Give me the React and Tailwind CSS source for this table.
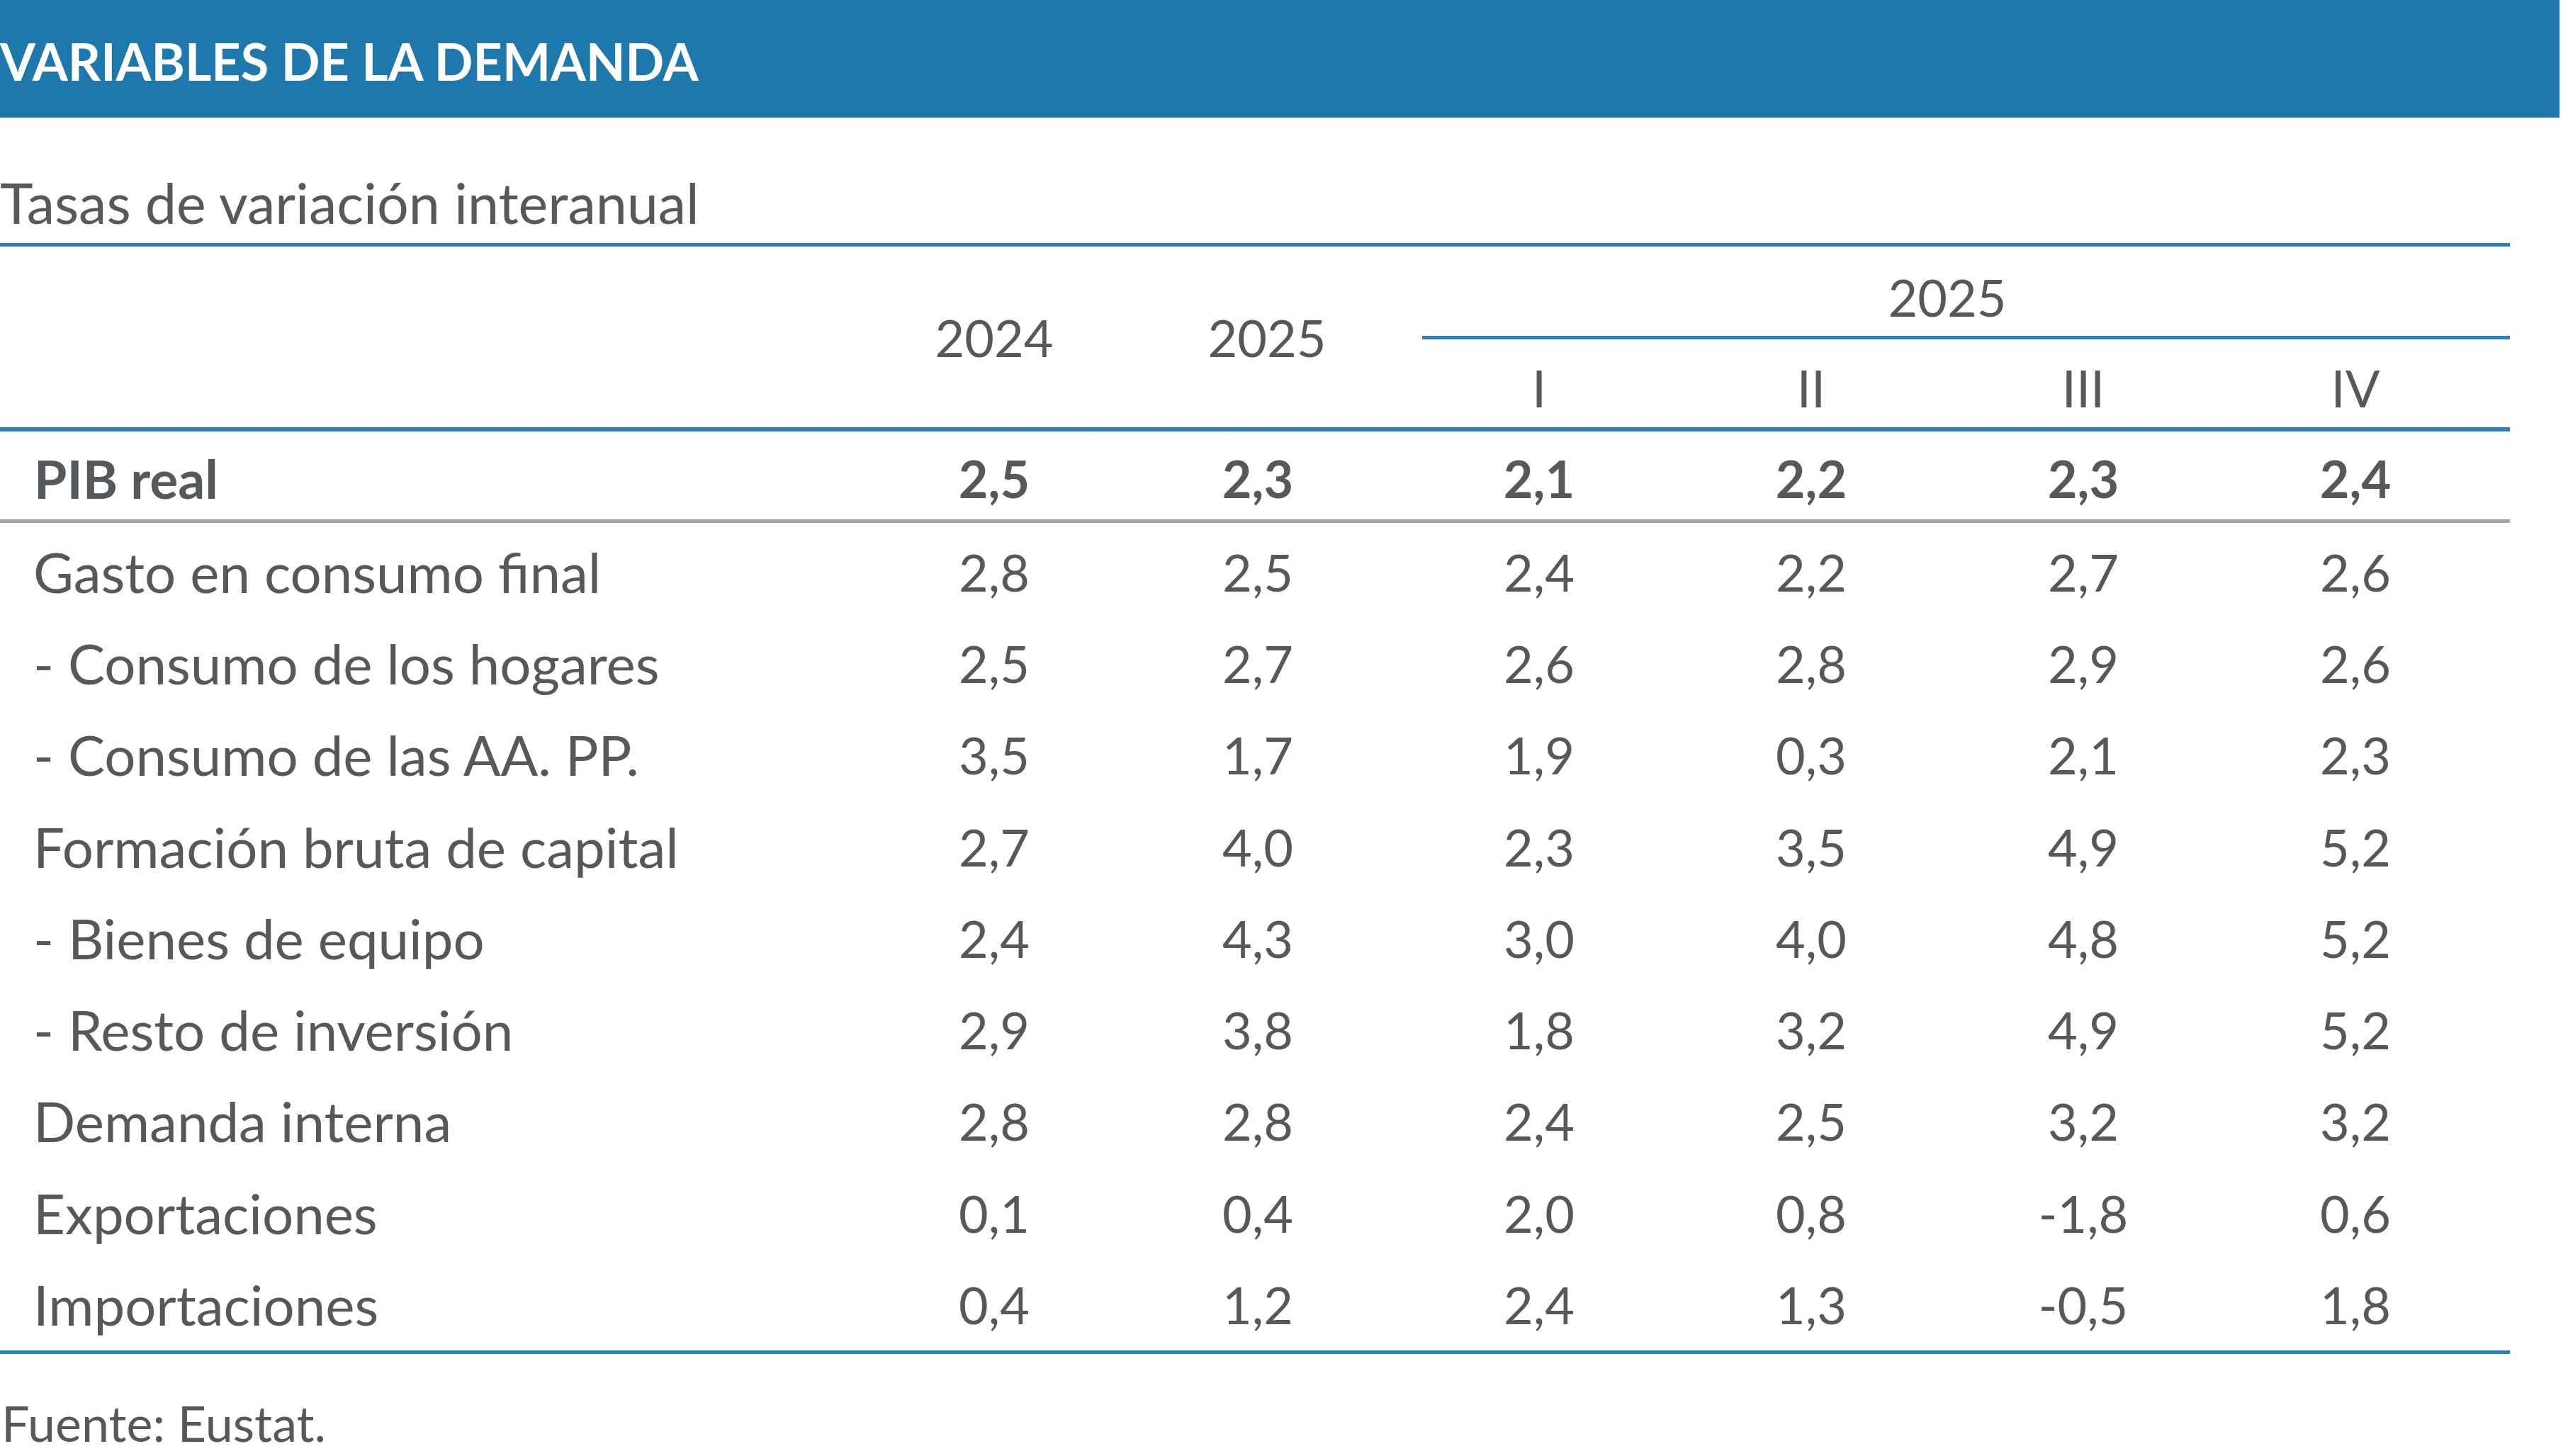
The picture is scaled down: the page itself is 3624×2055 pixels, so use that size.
import React from 'react'

const rows = [
  ['Gasto en consumo final', ['2,8', '2,5', '2,4', '2,2', '2,7', '2,6']],
  ['- Consumo de los hogares', ['2,5', '2,7', '2,6', '2,8', '2,9', '2,6']],
  ['- Consumo de las AA. PP.', ['3,5', '1,7', '1,9', '0,3', '2,1', '2,3']],
  ['Formación bruta de capital', ['2,7', '4,0', '2,3', '3,5', '4,9', '5,2']],
  ['- Bienes de equipo', ['2,4', '4,3', '3,0', '4,0', '4,8', '5,2']],
  ['- Resto de inversión', ['2,9', '3,8', '1,8', '3,2', '4,9', '5,2']],
  ['Demanda interna', ['2,8', '2,8', '2,4', '2,5', '3,2', '3,2']],
  ['Exportaciones', ['0,1', '0,4', '2,0', '0,8', '-1,8', '0,6']],
  ['Importaciones', ['0,4', '1,2', '2,4', '1,3', '-0,5', '1,8']],
]

const Cells = ({ values }) => (
  <>
    <div className="w-[372px] text-center text-[72px]">{values[0]}</div>
    <div className="w-[372px] text-center text-[72px]">{values[1]}</div>
    <div className="w-[19px]" />
    <div className="w-[384px] text-center text-[72px]">{values[2]}</div>
    <div className="w-[384px] text-center text-[72px]">{values[3]}</div>
    <div className="w-[384px] text-center text-[72px]">{values[4]}</div>
    <div className="w-[384px] text-center text-[72px]">{values[5]}</div>
  </>
)

const App = () => {
  return (
    <div className="w-[3624px] h-[2055px] bg-white text-[#56595c] font-['Lato',sans-serif] text-[72px] leading-none">
      <div className="w-[3612px] h-[166px] bg-[#1f78ab] flex items-center">
        <h1 className="text-white font-bold text-[72px] pt-[6px]">VARIABLES DE LA DEMANDA</h1>
      </div>

      <div className="w-[3542px]">
        <div className="h-[177px] flex items-end pb-[18px] text-[79px]">Tasas de variación interanual</div>
        <div className="h-[5px] bg-[#2a7db5]" />

        {/* cabecera */}
        <div className="flex h-[255px]">
          <div className="w-[1217px]" />
          <div className="w-[372px] flex items-center justify-center">2024</div>
          <div className="w-[372px] flex items-center justify-center pl-[26px]">2025</div>
          <div className="w-[19px]" />
          <div className="flex-1 flex flex-col">
            <div className="h-[126px] w-[1536px] flex items-center justify-center pt-[16px]">2025</div>
            <div className="h-[5px] ml-[27px] bg-[#2a7db5]" />
            <div className="flex-1 flex items-center pt-[12px]">
              <div className="w-[384px] text-center">I</div>
              <div className="w-[384px] text-center">II</div>
              <div className="w-[384px] text-center">III</div>
              <div className="w-[384px] text-center">IV</div>
            </div>
          </div>
        </div>
        <div className="h-[6px] bg-[#2a7db5]" />

        <div className="flex items-center h-[124px] font-bold pt-[8px]">
          <div className="w-[1217px] pl-[48px] text-[75px]">PIB real</div>
          <Cells values={['2,5', '2,3', '2,1', '2,2', '2,3', '2,4']} />
        </div>
        <div className="h-[5px] bg-[#a3a3a3]" />

        <div className="flex flex-col pt-[4px]">
          {rows.map(([label, values]) => (
            <div key={label} className="flex items-center h-[129.3px]">
              <div className="w-[1217px] pl-[47px] text-[78px]">{label}</div>
              <Cells values={values} />
            </div>
          ))}
        </div>
        <div className="h-[5px] bg-[#2a7db5]" />
      </div>

      <div className="pt-[62px] pl-[2px] text-[70px]">Fuente: Eustat.</div>
    </div>
  )
}

export default App
